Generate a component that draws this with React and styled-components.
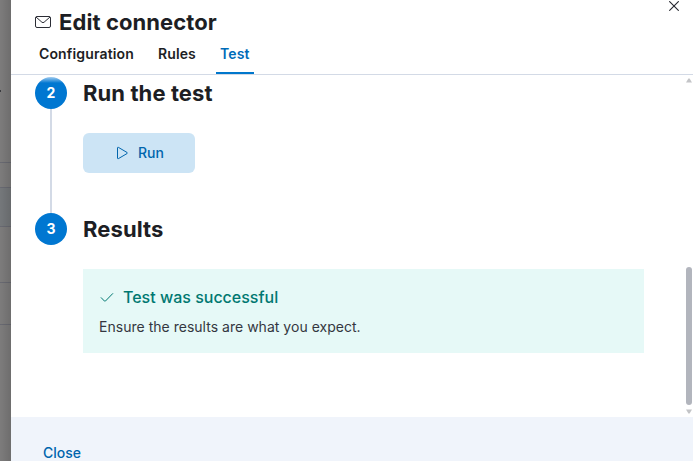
import React from "react";
import styled, { createGlobalStyle } from "styled-components";

const GlobalStyle = createGlobalStyle`
  *, *::before, *::after { box-sizing: border-box; }
  html, body { margin: 0; padding: 0; overflow: hidden; }
  body { font-family: Inter, "Liberation Sans", sans-serif; color: #1d1e24; background: #fff; }
  h1, h2, p { margin: 0; }
  button { font: inherit; border: 0; background: none; padding: 0; margin: 0; }
  svg { display: block; flex: none; }
`;

const Page = styled.div`
  display: flex;
  width: 693px;
  height: 461px;
  overflow: hidden;
`;

const Backdrop = styled.div`
  flex: none;
  display: flex;
  flex-direction: column;
  width: 11px;
  position: relative;
  background: #7d7c7c;

  &::after {
    content: "";
    position: absolute;
    inset: 0;
    background: linear-gradient(to right, rgba(0, 0, 0, 0), rgba(0, 0, 0, 0.12));
  }
`;

const BackdropRow = styled.div`
  flex: none;
  height: ${(p) => p.$height}px;
  background: ${(p) => (p.$shaded ? "#75787b" : "transparent")};
  border-bottom: 1px solid #696a72;
`;

const Speck = styled.span`
  position: absolute;
  left: 0;
  top: 90px;
  width: 1px;
  height: 2px;
  background: #3a3b3f;
`;

const Flyout = styled.section`
  flex: 1;
  min-width: 0;
  display: flex;
  flex-direction: column;
  position: relative;
  background: #fff;
`;

const Header = styled.header`
  flex: none;
  height: 75px;
  padding: 7px 24px 0;
  border-bottom: 1px solid #d3dae6;
`;

const TitleRow = styled.div`
  display: flex;
  align-items: center;
  gap: 8px;
  height: 30px;
`;

const Title = styled.h1`
  font-size: 22px;
  line-height: 30px;
  font-weight: 700;
  letter-spacing: 0.09px;
`;

const CloseIconButton = styled.button`
  position: absolute;
  right: 14px;
  top: 1px;
`;

const Tabs = styled.nav`
  display: flex;
  gap: 16px;
  height: 37px;
`;

const Tab = styled.button`
  height: 37px;
  padding: 0 4px 3px;
  font-size: 14px;
  line-height: 20px;
  font-weight: 600;
  letter-spacing: 0.14px;
  color: ${(p) => (p.$active ? "#006bb8" : "inherit")};
  box-shadow: ${(p) => (p.$active ? "inset 0 -2px #0077cc" : "none")};
`;

const Body = styled.div`
  flex: 1;
  display: flex;
  min-height: 0;
`;

const Steps = styled.div`
  flex: 1;
  padding: 2px 0 0 24px;
`;

const Step = styled.div`
  display: grid;
  grid-template-columns: 32px 1fr;
  column-gap: 16px;
  height: ${(p) => p.$height}px;
`;

const Rail = styled.div`
  display: flex;
  flex-direction: column;
  align-items: center;
`;

const StepNumber = styled.span`
  flex: none;
  width: 32px;
  height: 32px;
  border-radius: 50%;
  background: ${(p) =>
    p.$faded ? "linear-gradient(to bottom, #a3cdf0 0, #0077d1 6px)" : "#0077d1"};
  color: #fff;
  font-size: 14px;
  line-height: 32px;
  font-weight: 700;
  text-align: center;
`;

const Connector = styled.span`
  flex: 1;
  width: 2px;
  background: #d3dae6;
`;

const StepTitle = styled.h2`
  font-size: 22px;
  line-height: 32px;
  font-weight: 700;
  letter-spacing: 0.09px;
  margin-bottom: 24px;
`;

const RunButton = styled.button`
  display: flex;
  align-items: center;
  justify-content: center;
  gap: 8px;
  width: 112px;
  height: 40px;
  border-radius: 6px;
  background: #cce4f5;
  color: #0065ad;
  font-size: 14px;
  line-height: 20px;
  font-weight: 500;
`;

const Callout = styled.div`
  width: 561px;
  height: 84px;
  padding: 16px;
  background: #e6f9f7;
`;

const CalloutTitle = styled.p`
  display: flex;
  align-items: center;
  gap: 8px;
  font-size: 16px;
  line-height: 24px;
  font-weight: 500;
  color: #007871;
`;

const CalloutText = styled.p`
  margin-top: 8px;
  font-size: 14px;
  line-height: 20px;
  letter-spacing: 0.02px;
  color: #343741;
`;

const Scrollbar = styled.div`
  flex: none;
  width: 8px;
  display: flex;
  flex-direction: column;
  align-items: center;
  padding: 3px 1px 3px;
`;

const Thumb = styled.div`
  width: 6px;
  height: 138px;
  margin: auto 0 4px;
  border-radius: 3px;
  background: #b2b5bd;
`;

const Footer = styled.footer`
  flex: none;
  height: 44px;
  padding: 26px 32px 0;
  background: #f0f4fb;
`;

const CloseButton = styled.button`
  display: block;
  color: #0065ad;
  font-size: 14px;
  line-height: 20px;
  font-weight: 500;
`;

const MailIcon = () => (
  <svg width="16" height="16" viewBox="0 0 16 16" fill="none" stroke="#2b2d35">
    <rect x="0.5" y="2.5" width="15" height="11" rx="1.5" />
    <path d="M1 3l5.9 5.2a1.7 1.7 0 0 0 2.2 0L15 3" />
  </svg>
);

const CrossIcon = () => (
  <svg width="10" height="10" viewBox="0 0 10 10" fill="none" stroke="#24262e" strokeWidth="1.1">
    <path d="M0.3 0.3l9.4 9.4M9.7 0.3L0.3 9.7" />
  </svg>
);

const PlayIcon = () => (
  <svg width="16" height="16" viewBox="0 0 16 16" fill="none" stroke="#0065ad" strokeLinejoin="round">
    <path d="M3.5 2.7v10.6a.5.5 0 0 0 .8.4l8.8-5.2a.6.6 0 0 0 0-1L4.3 2.3a.5.5 0 0 0-.8.4z" />
  </svg>
);

const CheckIcon = () => (
  <svg width="16" height="16" viewBox="0 0 16 16" fill="none" stroke="#007871" strokeLinecap="round" strokeLinejoin="round">
    <path d="M2.2 8.7l3.3 3.4a.6.6 0 0 0 .9 0L13.7 4.6" />
  </svg>
);

const ArrowIcon = ({ down }) => (
  <svg width="6" height="5" viewBox="0 0 6 5" fill="#c3c4c7">
    <path d={down ? "M0 0.5h6L3.6 4.5H2.4z" : "M0 4.5h6L3.6 0.5H2.4z"} />
  </svg>
);

export default function App() {
  return (
    <>
      <GlobalStyle />
      <Page>
        <Backdrop>
          <BackdropRow $height={163} />
          <BackdropRow $height={25} />
          <BackdropRow $height={39} $shaded />
          <BackdropRow $height={56} />
          <BackdropRow $height={42} />
          <Speck />
        </Backdrop>
        <Flyout>
          <Header>
            <TitleRow>
              <MailIcon />
              <Title>Edit connector</Title>
            </TitleRow>
            <Tabs>
              <Tab>Configuration</Tab>
              <Tab>Rules</Tab>
              <Tab $active>Test</Tab>
            </Tabs>
            <CloseIconButton aria-label="Close flyout">
              <CrossIcon />
            </CloseIconButton>
          </Header>
          <Body>
            <Steps>
              <Step $height={136}>
                <Rail>
                  <StepNumber $faded>2</StepNumber>
                  <Connector />
                </Rail>
                <div>
                  <StepTitle>Run the test</StepTitle>
                  <RunButton>
                    <PlayIcon />
                    Run
                  </RunButton>
                </div>
              </Step>
              <Step $height={140}>
                <Rail>
                  <StepNumber>3</StepNumber>
                </Rail>
                <div>
                  <StepTitle>Results</StepTitle>
                  <Callout>
                    <CalloutTitle>
                      <CheckIcon />
                      Test was successful
                    </CalloutTitle>
                    <CalloutText>Ensure the results are what you expect.</CalloutText>
                  </Callout>
                </div>
              </Step>
            </Steps>
            <Scrollbar>
              <ArrowIcon />
              <Thumb />
              <ArrowIcon down />
            </Scrollbar>
          </Body>
          <Footer>
            <CloseButton>Close</CloseButton>
          </Footer>
        </Flyout>
      </Page>
    </>
  );
}
